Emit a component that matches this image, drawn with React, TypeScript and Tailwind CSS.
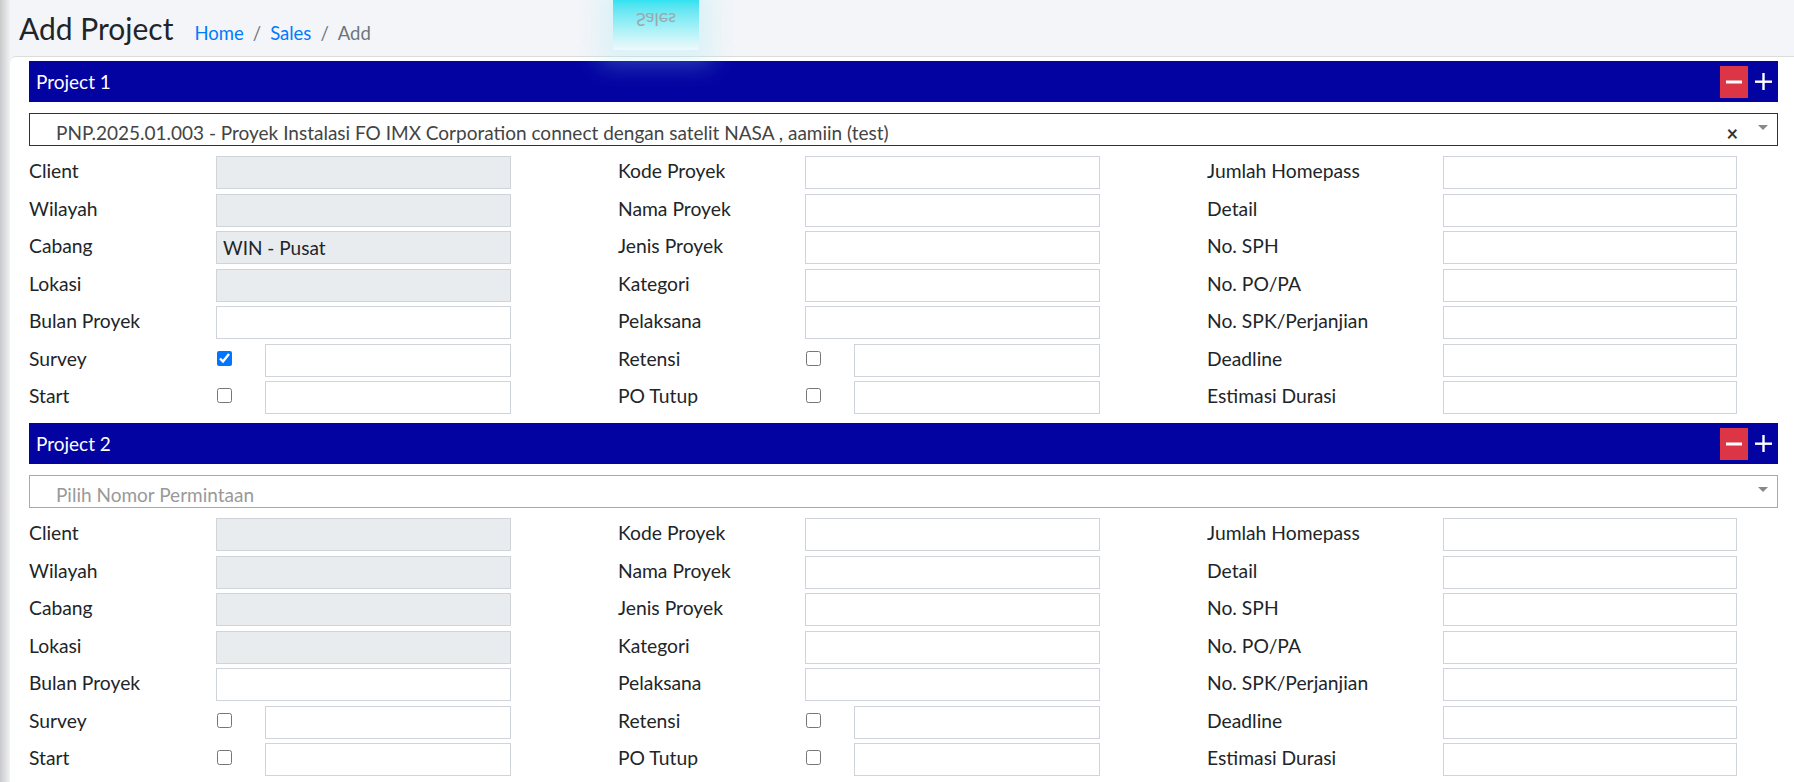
import React from "react";

type Field = {
  label: string;
  kind: "readonly" | "text" | "check";
  value?: string;
  checked?: boolean;
};

const Bar: React.FC<{ title: string }> = ({ title }) => (
  <div className="flex h-[41px] items-center justify-between bg-[#0303a1] pl-[7px] pr-[6px] text-white">
    <span className="text-[19px] leading-none">{title}</span>
    <div className="flex items-center">
      <button className="flex h-[32px] w-[28px] items-center justify-center bg-[#dc3545]">
        <svg width="16" height="16" viewBox="0 0 16 16">
          <rect x="0" y="6.5" width="16" height="3" fill="#fff" />
        </svg>
      </button>
      <span className="ml-[7px] flex items-center">
        <svg width="17" height="17" viewBox="0 0 17 17">
          <rect x="0" y="7.5" width="17" height="2.4" fill="#fff" />
          <rect x="7.3" y="0" width="2.4" height="17" fill="#fff" />
        </svg>
      </span>
    </div>
  </div>
);

const Arrow = () => (
  <svg width="10" height="5" viewBox="0 0 10 5" className="absolute right-[9px] top-[11px]">
    <path d="M0 0 L10 0 L5 5 Z" fill="#888" />
  </svg>
);

const FieldRow: React.FC<{ f: Field; labelW: string; inputW: string }> = ({ f, labelW, inputW }) => (
  <div className="flex h-[33px] items-center">
    <div className={`${labelW} shrink-0 -translate-y-[1px] text-[19.3px] text-[#212529]`}>{f.label}</div>
    {f.kind === "check" ? (
      <div className={`${inputW} flex h-[33px] shrink-0`}>
        <input
          type="checkbox"
          defaultChecked={f.checked}
          className="m-0 ml-[1px] mt-[7px] h-[15px] w-[15px]"
        />
        <input
          readOnly
          className="ml-auto h-[33px] w-[246px] border border-[#ced4da] bg-white px-[7px] text-[19px] outline-none"
        />
      </div>
    ) : (
      <input
        readOnly
        defaultValue={f.value}
        className={`${inputW} h-[33px] shrink-0 border border-[#ced4da] px-[6px] text-[19px] text-[#212529] outline-none ${
          f.kind === "readonly" ? "bg-[#e9ecef]" : "bg-white"
        }`}
      />
    )}
  </div>
);

const Section: React.FC<{ n: number; selected?: string; cabang?: string; survey?: boolean }> = ({
  n,
  selected,
  cabang,
  survey,
}) => {
  const col1: Field[] = [
    { label: "Client", kind: "readonly" },
    { label: "Wilayah", kind: "readonly" },
    { label: "Cabang", kind: "readonly", value: cabang },
    { label: "Lokasi", kind: "readonly" },
    { label: "Bulan Proyek", kind: "text" },
    { label: "Survey", kind: "check", checked: survey },
    { label: "Start", kind: "check" },
  ];
  const col2: Field[] = [
    { label: "Kode Proyek", kind: "text" },
    { label: "Nama Proyek", kind: "text" },
    { label: "Jenis Proyek", kind: "text" },
    { label: "Kategori", kind: "text" },
    { label: "Pelaksana", kind: "text" },
    { label: "Retensi", kind: "check" },
    { label: "PO Tutup", kind: "check" },
  ];
  const col3: Field[] = [
    { label: "Jumlah Homepass", kind: "text" },
    { label: "Detail", kind: "text" },
    { label: "No. SPH", kind: "text" },
    { label: "No. PO/PA", kind: "text" },
    { label: "No. SPK/Perjanjian", kind: "text" },
    { label: "Deadline", kind: "text" },
    { label: "Estimasi Durasi", kind: "text" },
  ];

  return (
    <div className="flex flex-col">
      <Bar title={`Project ${n}`} />
      {selected ? (
        <div className="relative mt-[11px] h-[33px] border border-[#1c1cdc] bg-white">
          <span className="absolute left-[26px] top-[7px] text-[19px] leading-[24px] text-[#444]">{selected}</span>
          <span className="absolute right-[39px] top-[7px] text-[20px] font-bold leading-[24px] text-[#333]">×</span>
          <Arrow />
        </div>
      ) : (
        <div className="relative mt-[11px] h-[33px] border border-[#aaa] bg-white">
          <span className="absolute left-[26px] top-[7px] text-[19px] leading-[24px] text-[#999]">
            Pilih Nomor Permintaan
          </span>
          <Arrow />
        </div>
      )}
      <div className="mt-[10px] grid grid-cols-[589px_589px_1fr]">
        <div className="flex flex-col gap-[4.5px]">
          {col1.map((f) => (
            <FieldRow key={f.label} f={f} labelW="w-[187px]" inputW="w-[295px]" />
          ))}
        </div>
        <div className="flex flex-col gap-[4.5px]">
          {col2.map((f) => (
            <FieldRow key={f.label} f={f} labelW="w-[187px]" inputW="w-[295px]" />
          ))}
        </div>
        <div className="flex flex-col gap-[4.5px]">
          {col3.map((f) => (
            <FieldRow key={f.label} f={f} labelW="w-[236px]" inputW="w-[294px]" />
          ))}
        </div>
      </div>
    </div>
  );
};

export default function App() {
  return (
    <div className="relative flex h-[782px] w-full overflow-hidden bg-[#f4f5f8] font-['Lato',sans-serif]">
      {/* sidebar shadow */}
      <div className="w-[10px] shrink-0 bg-gradient-to-r from-[#c9c9cb] to-[#f1f2f4]" />

      <div className="flex min-w-0 flex-1 flex-col">
        <header className="flex h-[56px] items-baseline pl-[9px] pt-[10px]">
          <h1 className="text-[30px] leading-[36px] text-[#212529]">Add Project</h1>
          <nav className="ml-[21px] flex items-baseline text-[18.5px] leading-[24px]">
            <span className="text-[#007bff]">Home</span>
            <span className="px-[9px] text-[#6c757d]">/</span>
            <span className="text-[#007bff]">Sales</span>
            <span className="px-[9px] text-[#6c757d]">/</span>
            <span className="text-[#6c757d]">Add</span>
          </nav>
        </header>

        <main className="flex-1 rounded-tl-[6px] border-t border-[#dcdcdc] bg-white pl-[19px] pr-[16px] pt-[4px]">
          <div className="flex flex-col gap-[9px]">
            <Section
              n={1}
              selected="PNP.2025.01.003 - Proyek Instalasi FO IMX Corporation connect dengan satelit NASA , aamiin (test)"
              cabang="WIN - Pusat"
              survey
            />
            <Section n={2} />
          </div>
        </main>
      </div>

      {/* floating "Sales" ghost overlay */}
      <div className="pointer-events-none absolute left-[613px] top-0 flex h-[50px] w-[86px] items-start justify-center bg-gradient-to-b from-[#2fe2f0] via-[#9aeff6] to-[#eef9fb] pt-[8px] shadow-[0_0_26px_14px_rgba(160,234,245,0.3)]">
        <span className="-scale-y-100 text-[18px] leading-[24px] text-[#9aa9ad]">Sales</span>
      </div>
    </div>
  );
}
